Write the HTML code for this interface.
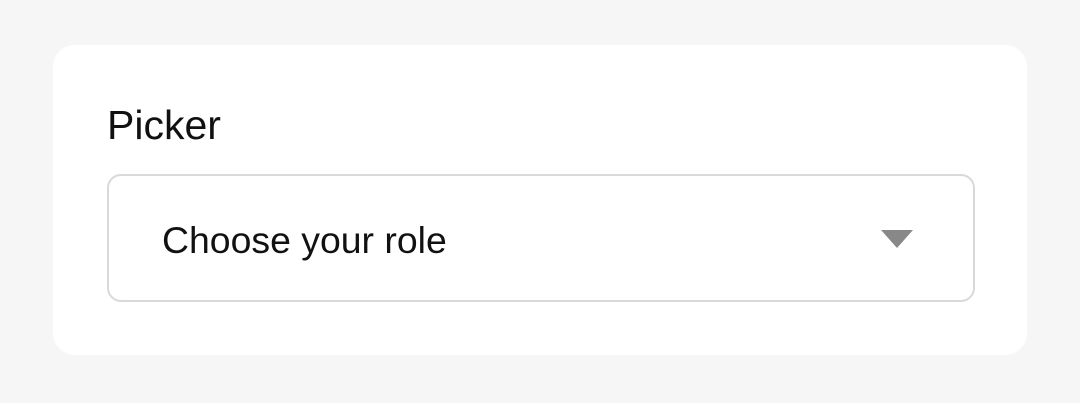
<!DOCTYPE html>
<html><head><style>
html,body{margin:0;padding:0;width:1080px;height:403px;background:#f6f6f6;overflow:hidden}
.card{position:absolute;left:53px;top:45px;width:974px;height:310px;background:#fff;border-radius:22px}
.lbl{position:absolute;left:107px;top:101px;font:41px/48px "Liberation Sans",sans-serif;color:#111}
.box{position:absolute;left:107px;top:174px;width:864px;height:124px;border:2px solid #d9d9d9;border-radius:14px;background:#fff}
.txt{position:absolute;left:162px;top:218px;font:37.4px/44px "Liberation Sans",sans-serif;color:#111}
svg{position:absolute;left:880px;top:229px}
</style></head><body>
<div class="card"></div>
<div class="lbl">Picker</div>
<div class="box"></div>
<div class="txt">Choose your role</div>
<svg width="34" height="20"><path d="M1 1H33L17 19Z" fill="#888"/></svg>
</body></html>
